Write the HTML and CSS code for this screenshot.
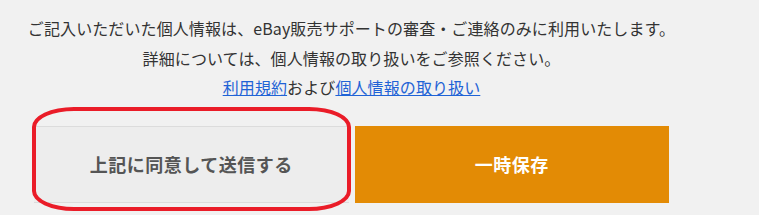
FILE: index.html
```html
<!DOCTYPE html>
<html lang="ja">
<head>
  <meta charset="UTF-8" />
  <title>送信確認</title>
  <link rel="stylesheet" href="styles.css">
</head>
<body>
  <div class="wrap">
    <div class="notice">
      <p>ご記入いただいた個人情報は、eBay販売サポートの審査・ご連絡のみに利用いたします。</p>
      <p>詳細については、個人情報の取り扱いをご参照ください。</p>
      <p><a href="#">利用規約</a>および<a href="#">個人情報の取り扱い</a></p>
    </div>
    <div class="btn-group">
      <div class="btn-slot">
        <button class="btn agree-btn">上記に同意して送信する</button>
        <span class="mark"></span>
      </div>
      <button class="btn save-btn">一時保存</button>
    </div>
  </div>
</body>
</html>
```

FILE: styles.css
```css
* { margin: 0; padding: 0; box-sizing: border-box; }
html, body {
  height: 100%;
  background: #f1f1f1;
  font-family: "Noto Sans CJK JP", "Noto Sans", sans-serif;
  color: #333;
}
.wrap {
  width: 703px;
  padding-top: 14px;
}
.notice {
  text-align: center;
  font-size: 16px;
  line-height: 29.5px;
  letter-spacing: 0.1px;
}
.notice a {
  color: #1f63d6;
  text-decoration: underline;
}
.btn-group {
  display: flex;
  gap: 6px;
  padding: 0 34px;
  margin-top: 23px;
}
.btn-slot {
  position: relative;
  flex: 1;
  display: flex;
}
.btn {
  flex: 1;
  height: 77px;
  border: none;
  font-family: inherit;
  font-size: 18px;
  font-weight: bold;
  letter-spacing: 0.5px;
  cursor: pointer;
}
.agree-btn {
  background: #ededed;
  color: #555;
  border-top: 1px solid #dcdcdc;
  border-bottom: 1px solid #dcdcdc;
}
.save-btn {
  background: #e38b05;
  color: #fff;
}
.mark {
  position: absolute;
  left: -2px;
  right: -2px;
  top: -19px;
  bottom: -8px;
  border: 4px solid #ea1c28;
  border-radius: 42px / 20px;
  pointer-events: none;
}
```
